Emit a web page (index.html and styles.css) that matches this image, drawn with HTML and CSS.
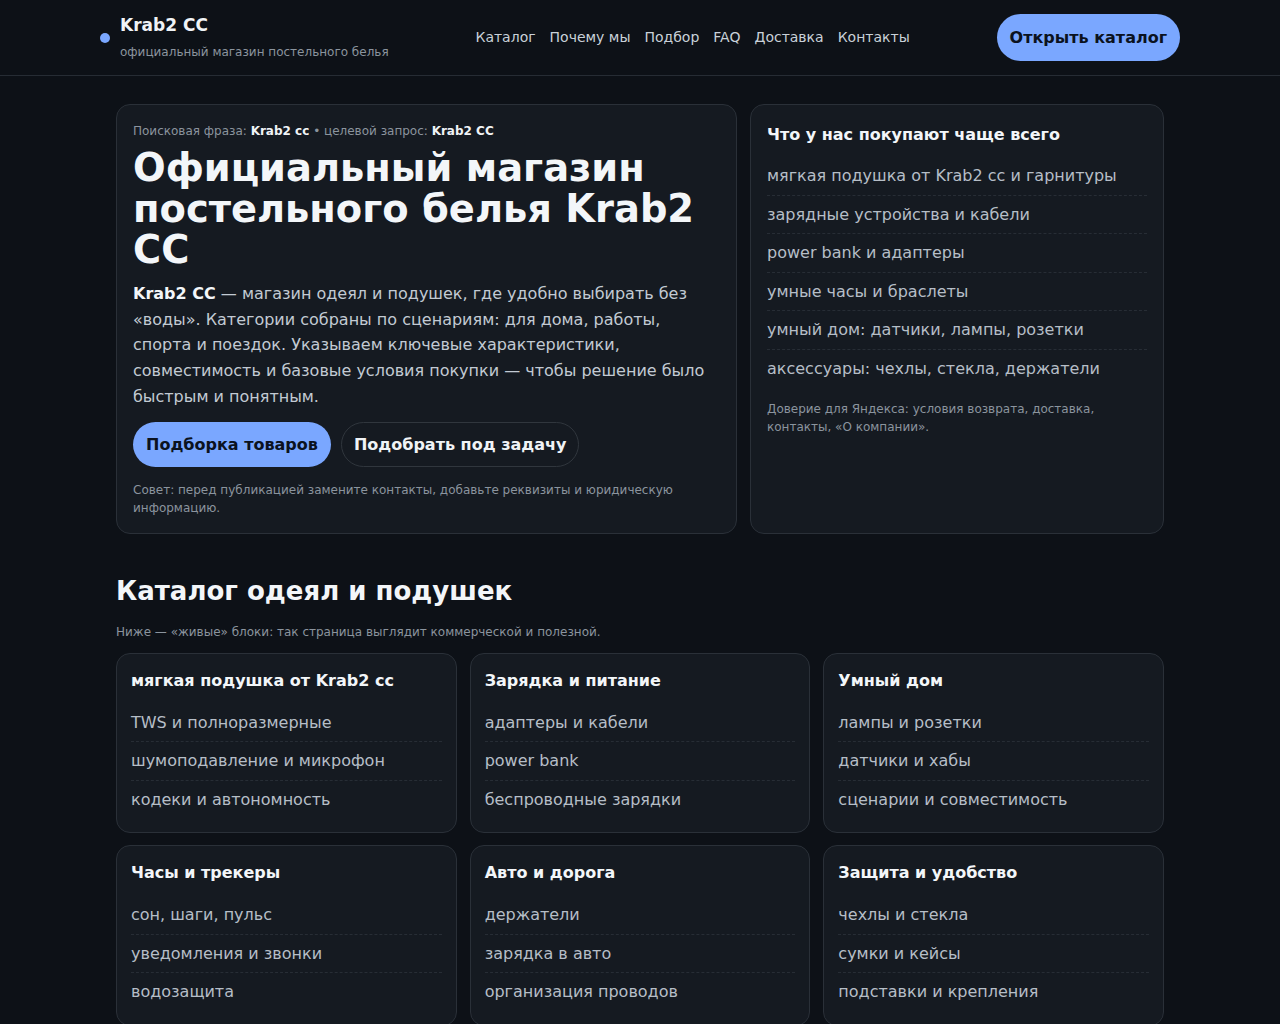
FILE: index.html
```html
<!DOCTYPE html>
<html lang="ru">
<head>
<meta charset="utf-8">
<title>Krab2 CC — официальный магазин постельного белья</title>
<link rel="stylesheet" href="styles.css">
</head>
<body>
<header class="site-header">
  <div class="header-inner">
    <div class="brand">
      <span class="brand-dot"></span>
      <div class="brand-text">
        <div class="brand-name">Krab2 CC</div>
        <div class="brand-sub">официальный магазин постельного белья</div>
      </div>
    </div>
    <nav class="nav">
      <a href="#">Каталог</a>
      <a href="#">Почему мы</a>
      <a href="#">Подбор</a>
      <a href="#">FAQ</a>
      <a href="#">Доставка</a>
      <a href="#">Контакты</a>
    </nav>
    <a class="btn btn-primary btn-header" href="#">Открыть каталог</a>
  </div>
</header>
<main class="main">
  <section class="hero-grid">
    <div class="card hero">
      <div class="meta">Поисковая фраза: <b>Krab2 cc</b> • целевой запрос: <b>Krab2 CC</b></div>
      <h1>Официальный магазин постельного белья Krab2 CC</h1>
      <p class="lead"><b>Krab2 CC</b> — магазин одеял и подушек, где удобно выбирать без «воды». Категории собраны по сценариям: для дома, работы, спорта и поездок. Указываем ключевые характеристики, совместимость и базовые условия покупки — чтобы решение было быстрым и понятным.</p>
      <div class="actions">
        <a class="btn btn-primary" href="#">Подборка товаров</a>
        <a class="btn btn-ghost" href="#">Подобрать под задачу</a>
      </div>
      <p class="tip">Совет: перед публикацией замените контакты, добавьте реквизиты и юридическую информацию.</p>
    </div>
    <aside class="card side">
      <h3>Что у нас покупают чаще всего</h3>
      <ul class="list">
        <li>мягкая подушка от Krab2 cc и гарнитуры</li>
        <li>зарядные устройства и кабели</li>
        <li>power bank и адаптеры</li>
        <li>умные часы и браслеты</li>
        <li>умный дом: датчики, лампы, розетки</li>
        <li>аксессуары: чехлы, стекла, держатели</li>
      </ul>
      <p class="note">Доверие для Яндекса: условия возврата, доставка, контакты, «О компании».</p>
    </aside>
  </section>

  <section class="catalog">
    <h2>Каталог одеял и подушек</h2>
    <p class="section-sub">Ниже — «живые» блоки: так страница выглядит коммерческой и полезной.</p>
    <div class="cat-grid">
      <div class="card cat">
        <h3>мягкая подушка от Krab2 cc</h3>
        <ul class="list">
          <li>TWS и полноразмерные</li>
          <li>шумоподавление и микрофон</li>
          <li>кодеки и автономность</li>
        </ul>
      </div>
      <div class="card cat">
        <h3>Зарядка и питание</h3>
        <ul class="list">
          <li>адаптеры и кабели</li>
          <li>power bank</li>
          <li>беспроводные зарядки</li>
        </ul>
      </div>
      <div class="card cat">
        <h3>Умный дом</h3>
        <ul class="list">
          <li>лампы и розетки</li>
          <li>датчики и хабы</li>
          <li>сценарии и совместимость</li>
        </ul>
      </div>
      <div class="card cat">
        <h3>Часы и трекеры</h3>
        <ul class="list">
          <li>сон, шаги, пульс</li>
          <li>уведомления и звонки</li>
          <li>водозащита</li>
        </ul>
      </div>
      <div class="card cat">
        <h3>Авто и дорога</h3>
        <ul class="list">
          <li>держатели</li>
          <li>зарядка в авто</li>
          <li>организация проводов</li>
        </ul>
      </div>
      <div class="card cat">
        <h3>Защита и удобство</h3>
        <ul class="list">
          <li>чехлы и стекла</li>
          <li>сумки и кейсы</li>
          <li>подставки и крепления</li>
        </ul>
      </div>
    </div>
  </section>
</main>
</body>
</html>
```

FILE: styles.css
```css
* { box-sizing: border-box; }

html, body {
  margin: 0;
  padding: 0;
  background: #0d1117;
  color: #e6edf3;
  font-family: "DejaVu Sans", "Noto Sans", sans-serif;
}

a { text-decoration: none; color: inherit; }

.site-header {
  height: 76px;
  border-bottom: 1px solid #262c34;
  background: #0d1117;
}

.header-inner {
  max-width: 1080px;
  height: 75px;
  margin: 0 auto;
  display: flex;
  align-items: center;
  justify-content: space-between;
}

.brand {
  display: flex;
  align-items: center;
  gap: 10px;
}

.brand-dot {
  width: 10px;
  height: 10px;
  border-radius: 50%;
  background: #7aa7ff;
  margin-top: 1px;
}

.brand-name {
  font-size: 17px;
  font-weight: 700;
  line-height: 22px;
  color: #f0f3f6;
}

.brand-sub {
  font-size: 12px;
  line-height: 18px;
  color: #8b949e;
  margin-top: 7px;
}

.nav {
  display: flex;
  gap: 14px;
  font-size: 14px;
  color: #c9d1d9;
  margin-bottom: 1px;
}

.btn {
  display: inline-flex;
  align-items: center;
  justify-content: center;
  height: 45px;
  padding: 0 13px;
  border-radius: 999px;
  font-weight: 700;
  font-size: 16px;
}

.btn-primary {
  background: #7aa7ff;
  color: #0b1220;
}

.btn-header {
  height: 47px;
  padding: 0 13px;
  font-size: 16px;
}

.btn-ghost {
  border: 1px solid #30363d;
  color: #f0f3f6;
  padding: 0 12px;
}

.main {
  max-width: 1080px;
  margin: 0 auto;
  padding: 28px 16px 40px;
}

.hero-grid {
  display: grid;
  grid-template-columns: 1.5fr 1fr;
  gap: 13px;
}

.card {
  background: #151a21;
  border: 1px solid #2a3038;
  border-radius: 14px;
}

.hero {
  padding: 17px 16px 16px;
}

.meta {
  font-size: 12px;
  line-height: 18px;
  color: #8b949e;
}

.meta b { color: #f0f3f6; }

h1 {
  margin: 7px 0 0;
  font-size: 38.4px;
  line-height: 41px;
  font-weight: 700;
  color: #f3f6f9;
}

.lead {
  margin: 11px 0 0;
  font-size: 16px;
  line-height: 25.7px;
  color: #c2cad3;
}

.lead b { color: #f3f6f9; }

.actions {
  display: flex;
  gap: 10px;
  margin-top: 12px;
}

.tip {
  margin: 14px 0 0;
  font-size: 12px;
  line-height: 18px;
  color: #8b949e;
}

.side {
  padding: 20px 16px 16px;
}

h3 {
  margin: 0;
  font-size: 16px;
  line-height: 20px;
  font-weight: 700;
  color: #f3f6f9;
}

.list {
  list-style: none;
  margin: 12px 0 0;
  padding: 0;
}

.list li {
  padding: 9px 0;
  font-size: 16px;
  line-height: 20px;
  color: #b6bec7;
  border-bottom: 1px dashed #272d35;
}

.list li:last-child { border-bottom: none; }

.side .list li { padding: 9px 0 8.6px; }

.note {
  margin: 12px 0 0;
  font-size: 12px;
  line-height: 18px;
  color: #8b949e;
}

.catalog h2 {
  margin: 40px 0 0;
  font-size: 26px;
  line-height: 34px;
  font-weight: 700;
  color: #f3f6f9;
}

.section-sub {
  margin: 15px 0 0;
  font-size: 12px;
  line-height: 18px;
  color: #8b949e;
}

.cat-grid {
  margin-top: 12px;
  display: grid;
  grid-template-columns: repeat(3, 1fr);
  column-gap: 13px;
  row-gap: 12px;
}

.cat {
  padding: 17px 14px 14px;
}

.cat .list { margin-top: 13px; }
.cat .list li { padding: 9px 0 8.5px; }
```
